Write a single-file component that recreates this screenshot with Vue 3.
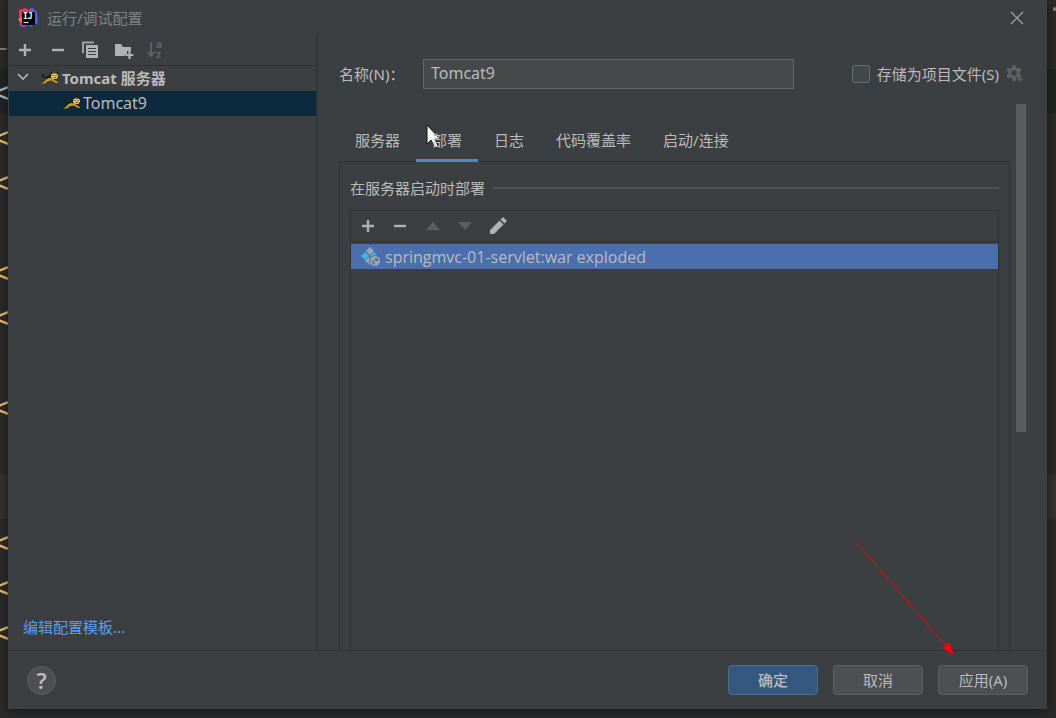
<script setup>
import { ref } from 'vue'

const name = ref('Tomcat9')
const stored = ref(false)
const activeTab = ref(1)
const tabs = ['服务器', '部署', '日志', '代码覆盖率', '启动/连接']
const editorRows = ['', '–', '<', '<', '<', '', '<', '<', '', '<', '', '', '<', '<', '<', '']
</script>

<template>
  <div class="screen">
    <div class="editor" aria-hidden="true">
      <div
        v-for="(row, i) in editorRows"
        :key="i"
        class="code-row"
        :class="{ caret: i === 2, folded: i === 11, rule: row === '–' }"
      >{{ row }}</div>
      <i class="dot"></i>
    </div>

    <section class="dialog" role="dialog" aria-labelledby="dialog-title">
      <header class="titlebar">
        <svg class="logo" width="20" height="20" viewBox="0 0 20 20">
          <path d="M1 2 8 0 12 4 9 12 4 14 1 10Z" fill="#fe315d" />
          <path d="M0 11 5 8 6 15 3 16Z" fill="#f97a12" />
          <path d="M11 3 14 0 19 4 20 15 12 19 9 14Z" fill="#2a6df4" />
          <path d="M11 1 14 0 18 4 19 9 12 8Z" fill="#6b57ff" />
          <path d="M2 14 10 15 9 18 6 19 2 18Z" fill="#c035d4" />
          <rect x="4" y="4" width="13" height="13" fill="#050505" />
          <text x="5" y="11" class="logo-text">IJ</text>
          <path d="M5.500 14.500h5" stroke="#ddd" stroke-width="1.200" />
        </svg>
        <h1 id="dialog-title">运行/调试配置</h1>
        <button class="icon-btn close" aria-label="关闭">
          <svg width="14" height="14" viewBox="0 0 14 14"><path d="M1 1 13 13M13 1 1 13" stroke="#a6a8a9" stroke-width="1.200" /></svg>
        </button>
      </header>

      <div class="body">
        <aside class="sidebar">
          <div class="toolbar side-tools">
            <button class="icon-btn" aria-label="添加">
              <svg width="16" height="16" viewBox="0 0 16 16"><path d="M8 2v12M2 8h12" stroke="#afb1b3" stroke-width="2.400" /></svg>
            </button>
            <button class="icon-btn" aria-label="移除">
              <svg width="17" height="16" viewBox="0 0 17 16"><path d="M3 8h12" stroke="#afb1b3" stroke-width="2.400" /></svg>
            </button>
            <button class="icon-btn" aria-label="复制">
              <svg width="17" height="18" viewBox="0 0 17 18">
                <path d="M1 12V1.500h11" fill="none" stroke="#9da0a2" stroke-width="2" />
                <path d="M4 4h12v13H4Z" fill="#afb1b3" />
                <path d="M6 7.500h8M6 10.500h8M6 13.500h8" stroke="#3c3f41" stroke-width="1.200" />
              </svg>
            </button>
            <button class="icon-btn" aria-label="新建文件夹">
              <svg class="folder" width="16" height="18" viewBox="0 0 16 18">
                <path d="M0 3h6l2 3h8v4h-4v3h-2v2H0Z" fill="#afb1b3" />
                <path d="M14.500 10v8M10.500 14h8" stroke="#afb1b3" stroke-width="2.200" />
              </svg>
            </button>
            <button class="icon-btn" aria-label="排序" disabled>
              <svg width="18" height="18" viewBox="0 0 18 18">
                <path d="M4 1v13M0 10.500 4 15 8 10.500" fill="none" stroke="#626466" stroke-width="1.800" />
                <text x="9" y="7" class="sort-letter">a</text>
                <text x="9" y="17" class="sort-letter">z</text>
              </svg>
            </button>
          </div>
          <ul class="tree">
            <li v-for="node in ['Tomcat 服务器', 'Tomcat9']" :key="node" class="tree-row" :class="node === 'Tomcat9' ? 'child selected' : 'parent'">
              <svg v-if="node !== 'Tomcat9'" class="chevron" width="12" height="12" viewBox="0 0 12 12"><path d="m1 2 5 5 5-5" fill="none" stroke="#afb1b3" stroke-width="1.700" /></svg>
              <svg class="cat" width="18" height="14" viewBox="0 0 18 14">
                <path d="M3 3Q0 5 3 6L8 7" fill="none" stroke="#1c1e1e" stroke-width="1.600" />
                <path d="M6 5 10 3 10 7 16 8 14 10 8 9 3 12Z" fill="#1c1e1e" />
                <path d="M0 12.500 3 11 5 8.500 8 7 12 7.500 14 9.500 17 11 17 12 14 11.500 11 9.500 7 10 4 12.500Z" fill="#d6a017" />
                <path d="M10 1 12 2.500H15L17 1V5.500L15.500 8H12L10 6Z" fill="#e9c66c" />
                <path d="M9.500 0 12 2 10 4ZM17.500 0 15 2 17 4Z" fill="#1c1e1e" />
                <path d="M11.500 4.500h1M14.500 4.500h1M13 6.500h1.500" stroke="#2c2413" />
              </svg>
              <span>{{ node }}</span>
            </li>
          </ul>
          <a class="template-link" href="#">编辑配置模板...</a>
        </aside>

        <main class="settings">
          <div class="form-row">
            <label class="name-label" for="config-name">名称(N)：</label>
            <input id="config-name" v-model="name" class="name-input" type="text" />
            <div class="store">
              <input id="store" v-model="stored" type="checkbox" />
              <label for="store">存储为项目文件(S)</label>
              <button class="icon-btn" aria-label="存储设置">
                <svg width="18" height="18" viewBox="0 0 18 18">
                  <circle cx="8" cy="8" r="4.300" fill="none" stroke="#606365" stroke-width="3" />
                  <path d="M8 0v3M8 13v3M1.100 4l2.600 1.500M12.300 10.500l2.600 1.500M14.900 4l-2.600 1.500M3.700 10.500 1.100 12" stroke="#606365" stroke-width="3.200" />
                  <path d="M10 13h8l-4 4Z" fill="#606365" stroke="#3c3f41" stroke-width=".6" />
                </svg>
              </button>
            </div>
          </div>

          <div class="scroll-area">
            <div class="content">
              <div class="tabs" role="tablist">
                <button
                  v-for="(tab, i) in tabs"
                  :key="tab"
                  role="tab"
                  class="tab"
                  :class="{ active: i === activeTab }"
                  :aria-selected="i === activeTab"
                  @click="activeTab = i"
                >{{ tab }}</button>
              </div>
              <div class="panel">
                <h2 class="group-title">在服务器启动时部署</h2>
                <div class="deploy">
                  <div class="toolbar deploy-tools">
                    <button class="icon-btn" aria-label="添加">
                      <svg width="16" height="16" viewBox="0 0 16 16"><path d="M8 2v12M2 8h12" stroke="#afb1b3" stroke-width="2.400" /></svg>
                    </button>
                    <button class="icon-btn" aria-label="移除">
                      <svg width="16" height="16" viewBox="0 0 16 16"><path d="M2 8h12" stroke="#afb1b3" stroke-width="2.400" /></svg>
                    </button>
                    <button class="icon-btn" aria-label="上移" disabled>
                      <svg width="17" height="16" viewBox="0 0 17 16"><path d="M2 12 9 4 16 12Z" fill="#5c5e60" /></svg>
                    </button>
                    <button class="icon-btn" aria-label="下移" disabled>
                      <svg width="16" height="16" viewBox="0 0 16 16"><path d="M1 4 8 12 15 4Z" fill="#5c5e60" /></svg>
                    </button>
                    <button class="icon-btn" aria-label="编辑">
                      <svg width="18" height="18" viewBox="0 0 18 18"><path d="M1 13 10.500 3.500 14.500 7.500 5 17H1ZM11.500 2.500 14 0 18 4 15.500 6.500Z" fill="#afb1b3" /></svg>
                    </button>
                  </div>
                  <ul class="artifacts">
                    <li class="artifact">
                      <svg width="20" height="20" viewBox="0 0 20 20">
                        <path d="M9 0 13 4 9 8 5 4Z" fill="#9aa7b0" />
                        <path d="M4 5 8 9 4 13 0 9Z" fill="#40b6e0" />
                        <path d="M13 5 16 8 11 11 9 9Z" fill="#40b6e0" />
                        <path d="M8 10 11 13 9 18 4 14Z" fill="#9aa7b0" />
                        <circle cx="14" cy="14" r="5.500" fill="#9aa7b0" stroke="#4b6eaf" />
                        <path d="M14 11.500q2-1 3.500 1l-1 2-2-1-1 1ZM10.500 12.500l3 3 .5 2.500q-3-1-3.500-5.500Z" fill="#4b6eaf" />
                      </svg>
                      <span>springmvc-01-servlet:war exploded</span>
                    </li>
                  </ul>
                </div>
              </div>
            </div>
            <div class="scrollbar"><div class="thumb"></div></div>
          </div>
        </main>
      </div>

      <footer class="footer">
        <button class="help" aria-label="帮助">?</button>
        <button class="btn primary">确定</button>
        <button class="btn">取消</button>
        <button class="btn">应用(A)</button>
      </footer>
    </section>

    <svg class="pointer" width="16" height="26" viewBox="0 0 16 26">
      <path d="M1 1V20L5 16 9 24 12 22 9 15H14Z" fill="#fff" stroke="#111" stroke-width="1" />
    </svg>
    <svg class="annotation" width="100" height="116" viewBox="0 0 100 116">
      <path d="M1 1 92 106" stroke="#f00" stroke-width="1" />
      <path d="M98 113 88 107 94 102Z" fill="#f00" stroke="#f00" />
    </svg>
  </div>
</template>

<style>
html, body, #app { height: 100%; }
body { margin: 0; background: #2b2b2b; }
</style>

<style scoped>
* { box-sizing: border-box; }
.screen {
  position: relative;
  height: 100%;
  padding: 0 9px 9px 8px;
  overflow: hidden;
  font: 15px/20px "Noto Sans", "Noto Sans CJK SC", sans-serif;
  color: #bbbbbb;
}
button, input { font: inherit; color: inherit; }
ul { list-style: none; margin: 0; padding: 0; }
svg { display: block; flex: none; }
.editor { position: absolute; inset: -21px 0 0; background: #2b2b2b; }
.code-row {
  height: 45px;
  font: 28px/48px "DejaVu Sans Mono", monospace;
  color: #e8bf6a;
  text-indent: -8px;
}
.code-row.caret { background: #232525; color: #a9b7c6; }
.code-row.folded { background: #323232; }
.code-row.rule { color: #808080; text-indent: -10px; }
.dot { position: absolute; right: 0; top: 28px; width: 3px; height: 4px; border-radius: 2px; background: #888; }
.dialog {
  position: relative;
  height: 100%;
  display: flex;
  flex-direction: column;
  background: #3c3f41;
  box-shadow: 0 2px 10px rgba(0, 0, 0, .5);
}
.icon-btn { display: grid; place-items: center; padding: 0; border: 0; background: none; }
.titlebar { flex: none; height: 35px; display: flex; align-items: center; gap: 9px; padding: 0 23px 0 10px; }
.titlebar h1 { margin: 0; font-size: 15px; line-height: 20px; font-weight: 400; color: #7f8182; }
.logo-text { font: bold 8px "DejaVu Sans Mono", monospace; fill: #fff; }
.sort-letter { font: bold 10px "Noto Sans", sans-serif; fill: #626466; }
.folder { overflow: visible; }
.close { margin-left: auto; }
.body { flex: 1; min-height: 0; display: flex; border-bottom: 1px solid #323232; }
.sidebar { width: 310px; flex: none; display: flex; flex-direction: column; border-right: 2px solid #343638; padding-left: 1px; }
.toolbar { display: flex; align-items: center; height: 31px; border-bottom: 1px solid #323232; }
.side-tools { gap: 16px; padding-left: 8px; }
.tree-row { display: flex; align-items: center; height: 25px; padding-bottom: 2px; }
.parent { padding-left: 8px; font-weight: 700; }
.parent .cat { margin: 0 3px 0 12px; }
.child { padding-left: 54px; font-size: 16px; }
.child .cat { margin-right: 2px; }
.selected { background: #0d293e; }
.template-link { margin: auto 0 13px 14px; color: #589df6; text-decoration: none; }
.settings { flex: 1; min-width: 0; display: flex; flex-direction: column; padding-left: 21px; }
.form-row { flex: none; display: flex; align-items: center; height: 69px; padding: 8px 23px 0 0; }
.name-label { width: 84px; flex: none; white-space: nowrap; }
.name-input {
  flex: 1;
  min-width: 0;
  height: 30px;
  margin-right: 58px;
  padding: 0 7px 2px;
  border: 1px solid #646464;
  background: #45494a;
  outline: none;
  font-size: 16px;
}
.store { display: flex; align-items: center; white-space: nowrap; }
.store input {
  appearance: none;
  width: 18px;
  height: 18px;
  margin: 0 7px 0 0;
  border: 1px solid #6b6b6b;
  border-radius: 3px;
  background: #43494a;
}
.store label { margin-right: 7px; }
.scroll-area { flex: 1; min-height: 0; display: flex; }
.content { flex: 1; min-width: 0; display: flex; flex-direction: column; padding-top: 16px; }
.tabs { position: relative; z-index: 1; display: flex; height: 42px; flex: none; }
.tab { padding: 0 16px; border: 0; border-bottom: 3px solid transparent; background: none; white-space: nowrap; }
.tab.active { border-bottom-color: #4a88c7; }
.panel {
  flex: 1;
  min-height: 0;
  display: flex;
  flex-direction: column;
  margin-top: -1px;
  padding: 16px 10px 0;
  border: 1px solid #323232;
  border-bottom: 0;
}
.group-title { display: flex; align-items: center; gap: 8px; margin: 0 0 12px; font-size: 15px; line-height: 20px; font-weight: 400; }
.group-title::after { content: ""; flex: 1; height: 2px; background: #515151; }
.deploy { flex: 1; border: 1px solid #323232; border-bottom: 0; }
.deploy-tools { gap: 16px; padding-left: 9px; }
.artifacts { padding-top: 2px; }
.artifact { display: flex; align-items: center; gap: 4px; height: 25px; padding-left: 10px; background: #4b6eaf; font-family: "Open Sans", "Noto Sans", sans-serif; font-size: 16px; }
.scrollbar { width: 37px; flex: none; padding: 0 21px 0 6px; }
.thumb { width: 10px; height: 60%; background: #595b5d; }
.footer { flex: none; display: flex; align-items: center; gap: 15px; height: 58px; padding: 0 19px; }
.help {
  width: 29px;
  height: 29px;
  margin-right: auto;
  padding: 0;
  border: 1px solid #5e6060;
  border-radius: 50%;
  background: #4c5052;
  font-size: 22px;
  font-weight: 600;
  line-height: 22px;
}
.btn { width: 90px; height: 30px; padding: 0; border: 1px solid #5e6060; border-radius: 4px; background: #4c5052; }
.primary { border-color: #4c708c; background: #365880; font-weight: 500; }
.pointer { position: absolute; left: 426px; top: 124px; }
.annotation { position: absolute; right: 101px; bottom: 61px; }
</style>
